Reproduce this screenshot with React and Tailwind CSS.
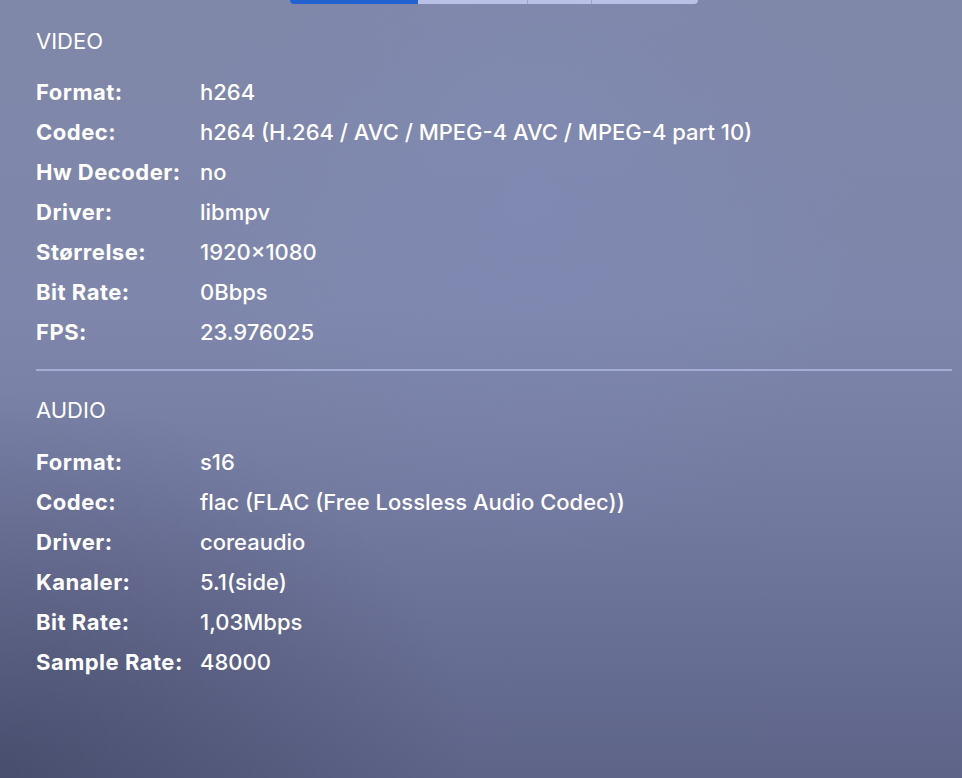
import React from "react";

const video = [
  ["Format:", "h264"],
  ["Codec:", "h264 (H.264 / AVC / MPEG-4 AVC / MPEG-4 part 10)"],
  ["Hw Decoder:", "no"],
  ["Driver:", "libmpv"],
  ["Størrelse:", "1920×1080"],
  ["Bit Rate:", "0Bbps"],
  ["FPS:", "23.976025"],
];
const audio = [
  ["Format:", "s16"],
  ["Codec:", "flac (FLAC (Free Lossless Audio Codec))"],
  ["Driver:", "coreaudio"],
  ["Kanaler:", "5.1(side)"],
  ["Bit Rate:", "1,03Mbps"],
  ["Sample Rate:", "48000"],
];

function Rows({ rows }) {
  return (
    <div className="flex flex-col">
      {rows.map(([k, v]) => (
        <div key={k} className="flex h-10 items-center">
          <div className="w-[164px] font-bold tracking-[0.5px]">{k}</div>
          <div className="font-medium">{v}</div>
        </div>
      ))}
    </div>
  );
}

export default function App() {
  return (
    <div
      className="relative h-[778px] w-[962px] overflow-hidden text-white text-[22px] bg-[linear-gradient(180deg,#7f88a8_0%,#7e87ab_40%,#737aa0_65%,#5d6488_100%)]"
      style={{ fontFamily: "Inter, 'Noto Sans', sans-serif" }}
    >
      <div className="pointer-events-none absolute inset-0 bg-[radial-gradient(ellipse_at_0%_100%,rgba(40,45,70,0.4)_0%,rgba(40,45,70,0)_35%)]" />
      <div className="pointer-events-none absolute inset-0 bg-[radial-gradient(ellipse_at_55%_25%,rgba(130,140,190,0.35)_0%,rgba(130,140,190,0)_45%)]" />
      <div className="relative">
        <div className="flex h-[4px] justify-center pl-[26px]">
          <div className="flex w-[408px] overflow-hidden rounded-b-[5px]">
            <div className="w-[128px] bg-[#2262d0]" />
            <div className="w-[110px] border-r border-[#9ba3c6] bg-[#b9c2e6]" />
            <div className="w-[64px] border-r border-[#9ba3c6] bg-[#b9c2e6]" />
            <div className="flex-1 bg-[#b9c2e6]" />
          </div>
        </div>
        <div className="px-9">
          <div className="flex h-[72px] items-center pb-[2px] pt-[4px] text-[22px]">VIDEO</div>
          <div className="-mt-[4px]">
            <Rows rows={video} />
          </div>
          <div className="mt-[17px] h-[2px] w-[916px] bg-[#a4acd6]" />
          <div className="flex h-[76px] items-center pt-[2px] text-[22px]">AUDIO</div>
          <div className="-mt-[5px]">
            <Rows rows={audio} />
          </div>
        </div>
      </div>
    </div>
  );
}
